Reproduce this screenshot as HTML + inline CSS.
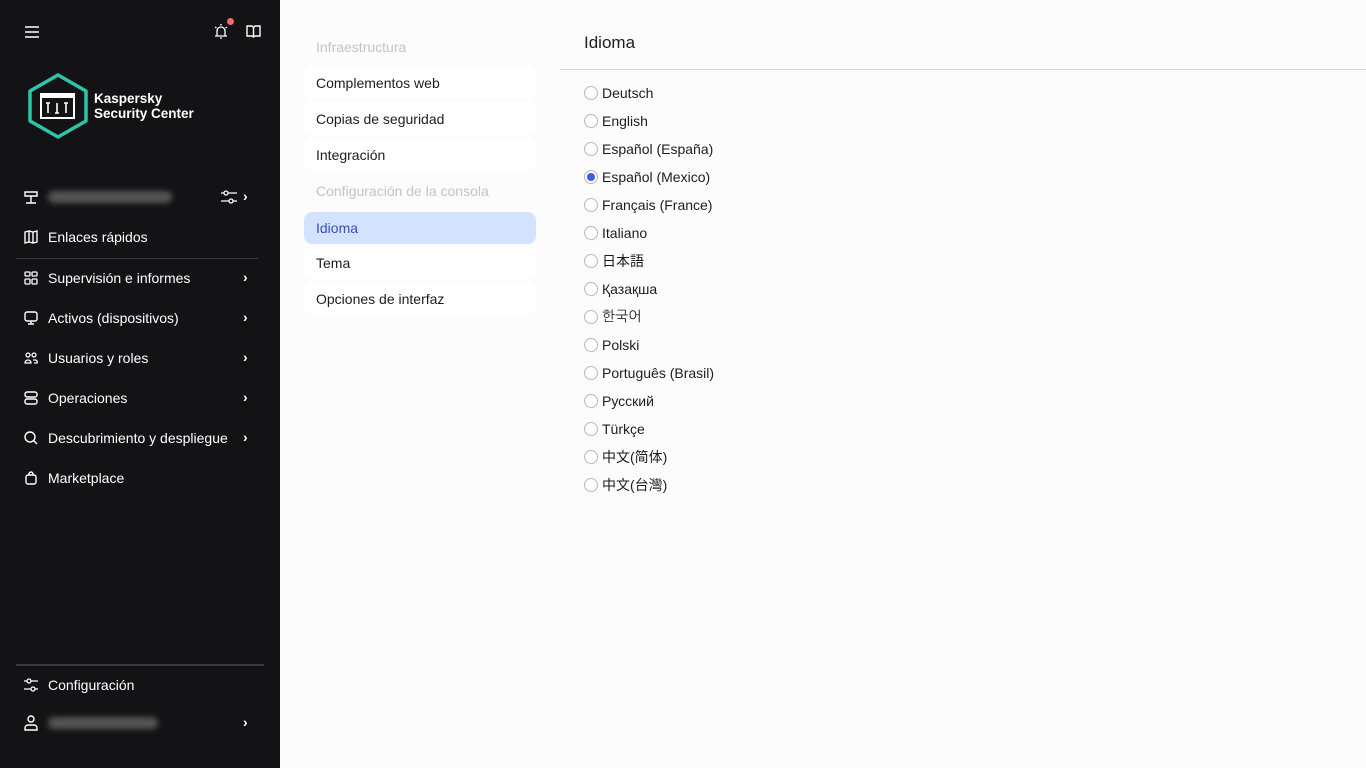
<!DOCTYPE html>
<html><head><meta charset="utf-8"><style>
*{margin:0;padding:0;box-sizing:border-box}
body{width:1366px;height:768px;overflow:hidden;background:#fcfcfc;font-family:"Liberation Sans","Noto Sans CJK JP",sans-serif;position:relative}
.sb{position:absolute;left:0;top:0;width:280px;height:768px;background:#131316;color:#fff}
.it{position:absolute;left:24px;height:20px;display:flex;align-items:center;font-size:14px;color:#fff}
.it svg{margin-right:10px}
.chev{position:absolute;left:243px;font-size:14px;font-weight:bold;color:#fff}
.blur{height:12px;background:#555;border-radius:6px;filter:blur(3px)}
.nav{position:absolute;left:304px;width:232px;height:32px;border-radius:8px;background:#fff;font-size:14px;color:#1d1d1f;padding-left:12px;line-height:32px}
.cap{position:absolute;left:316px;font-size:14px;color:#c4c4c6}
.r{position:absolute;left:584px;height:20px;display:flex;align-items:center;font-size:14px;color:#1d1d1f}
.r i{width:14px;height:14px;border:1px solid #b8b8bc;border-radius:50%;margin-right:4px;background:#fff;display:inline-block;position:relative}
.r i.on:after{content:"";position:absolute;left:2px;top:2px;width:8px;height:8px;border-radius:50%;background:#3c5ee6}
</style></head><body>
<div class="sb">
<svg style="position:absolute;left:25px;top:26px" width="14" height="12"><path d="M0 1h14M0 6h14M0 11h14" stroke="#fff" stroke-width="1.5"/></svg>
<svg style="position:absolute;left:213px;top:23px" width="16" height="16" fill="none" stroke="#fff" stroke-width="1.3"><path d="M4 13V8a4 4 0 018 0v5M2 13h12M7 15h2M2 4l1.5 1M14 4l-1.5 1M8 1v1.5"/></svg>
<div style="position:absolute;left:227px;top:18px;width:7px;height:7px;border-radius:50%;background:#f46a6a"></div>
<svg style="position:absolute;left:246px;top:25px" width="15" height="13" fill="none" stroke="#fff" stroke-width="1.4"><path d="M1 1h5l1.5 1.5L9 1h5v10H9l-1.5 1L6 11H1zM7.5 2.5V12"/></svg>
<svg style="position:absolute;left:27px;top:73px" width="62" height="66"><polygon points="31,2 59,18 59,48 31,64 3,48 3,18" fill="none" stroke="#2ec4a7" stroke-width="3.5" stroke-linejoin="round"/><rect x="14" y="21" width="33" height="24" fill="none" stroke="#fff" stroke-width="2"/><rect x="14" y="21" width="33" height="4" fill="#fff"/><path d="M21 30v10M19 30h4M30 30v10M28 40h4M39 30v10M37 30h4" stroke="#fff" stroke-width="1.6"/></svg>
<div style="position:absolute;left:94px;top:91px;font-size:13.5px;font-weight:bold;line-height:15px">Kaspersky<br>Security Center</div>
<div class="it" style="top:187px"><svg width="14" height="14" fill="none" stroke="#fff" stroke-width="1.4"><path d="M1 2h12v4H1zM7 6v7M2 13h10"/></svg><div class="blur" style="width:124px"></div></div>
<svg style="position:absolute;left:221px;top:190px" width="16" height="14" fill="none" stroke="#fff" stroke-width="1.3"><path d="M0 3h16M0 11h16"/><circle cx="5" cy="3" r="2" fill="#131316"/><circle cx="10" cy="11" r="2" fill="#131316"/></svg>
<div class="chev" style="top:188px">›</div>
<div class="it" style="top:227px"><svg width="14" height="14" fill="none" stroke="#fff" stroke-width="1.4"><path d="M1 2l4-1 4 1 4-1v11l-4 1-4-1-4 1zM5 1v11M9 2v11"/></svg>Enlaces rápidos</div>
<div style="position:absolute;left:16px;top:258px;width:242px;height:1px;background:#3a3a3e"></div>
<div class="it" style="top:268px"><svg width="14" height="14" fill="none" stroke="#fff" stroke-width="1.3"><rect x="1" y="1" width="5" height="4" rx="1"/><rect x="8" y="1" width="5" height="4" rx="1"/><rect x="1" y="8" width="5" height="5" rx="1"/><rect x="8" y="8" width="5" height="5" rx="1"/></svg>Supervisión e informes</div><div class="chev" style="top:269px">›</div>
<div class="it" style="top:308px"><svg width="14" height="14" fill="none" stroke="#fff" stroke-width="1.4"><rect x="1" y="1" width="12" height="9" rx="2"/><path d="M7 10v3M4 13h6"/></svg>Activos (dispositivos)</div><div class="chev" style="top:309px">›</div>
<div class="it" style="top:348px"><svg width="14" height="14" fill="none" stroke="#fff" stroke-width="1.3"><circle cx="4" cy="4" r="2"/><circle cx="10" cy="4" r="2"/><path d="M1 12a3 3 0 016 0zM9 9h2a2 2 0 012 3h-3"/></svg>Usuarios y roles</div><div class="chev" style="top:349px">›</div>
<div class="it" style="top:388px"><svg width="14" height="14" fill="none" stroke="#fff" stroke-width="1.4"><rect x="1" y="1" width="12" height="5" rx="2"/><rect x="1" y="8" width="12" height="5" rx="2"/></svg>Operaciones</div><div class="chev" style="top:389px">›</div>
<div class="it" style="top:428px"><svg width="14" height="14" fill="none" stroke="#fff" stroke-width="1.4"><circle cx="6" cy="6" r="5"/><path d="M9.5 9.5L13 13"/></svg>Descubrimiento y despliegue</div><div class="chev" style="top:429px">›</div>
<div class="it" style="top:468px"><svg width="14" height="14" fill="none" stroke="#fff" stroke-width="1.4"><rect x="2" y="4" width="10" height="9" rx="2"/><path d="M5 4V3a2 2 0 014 0v1"/></svg>Marketplace</div>
<div style="position:absolute;left:16px;top:664px;width:248px;height:2px;background:#3a3a3e"></div>
<div class="it" style="top:675px"><svg width="14" height="14" fill="none" stroke="#fff" stroke-width="1.3"><path d="M0 3h14M0 11h14"/><circle cx="5" cy="3" r="2" fill="#131316"/><circle cx="9" cy="11" r="2" fill="#131316"/></svg>Configuración</div>
<div class="it" style="top:713px"><svg width="14" height="16" fill="none" stroke="#fff" stroke-width="1.4"><circle cx="7" cy="4" r="3"/><path d="M1 15v-2a3 3 0 013-3h6a3 3 0 013 3v2z"/></svg><div class="blur" style="width:110px"></div></div><div class="chev" style="top:714px">›</div>
</div>
<div class="cap" style="top:39px">Infraestructura</div>
<div class="nav" style="top:67px">Complementos web</div>
<div class="nav" style="top:103px">Copias de seguridad</div>
<div class="nav" style="top:139px">Integración</div>
<div class="cap" style="top:183px">Configuración de la consola</div>
<div class="nav" style="top:212px;background:#d3e2fe;color:#3b4fb8">Idioma</div>
<div class="nav" style="top:247px">Tema</div>
<div class="nav" style="top:283px">Opciones de interfaz</div>
<div style="position:absolute;left:584px;top:33px;font-size:17px;color:#1d1d1f">Idioma</div>
<div style="position:absolute;left:560px;top:69px;width:806px;height:1px;background:#d4d4d6"></div>
<div class="r" style="top:83px"><i></i>Deutsch</div>
<div class="r" style="top:111px"><i></i>English</div>
<div class="r" style="top:139px"><i></i>Español (España)</div>
<div class="r" style="top:167px"><i class="on"></i>Español (Mexico)</div>
<div class="r" style="top:195px"><i></i>Français (France)</div>
<div class="r" style="top:223px"><i></i>Italiano</div>
<div class="r" style="top:251px"><i></i>日本語</div>
<div class="r" style="top:279px"><i></i>Қазақша</div>
<div class="r" style="top:307px"><i></i><span style="font-family:'NanumGothic','Noto Sans CJK KR',sans-serif">한국어</span></div>
<div class="r" style="top:335px"><i></i>Polski</div>
<div class="r" style="top:363px"><i></i>Português (Brasil)</div>
<div class="r" style="top:391px"><i></i>Русский</div>
<div class="r" style="top:419px"><i></i>Türkçe</div>
<div class="r" style="top:447px"><i></i>中文(简体)</div>
<div class="r" style="top:475px"><i></i><span style="font-family:'Liberation Sans','Noto Sans CJK TC',sans-serif">中文(台灣)</span></div>
</body></html>
